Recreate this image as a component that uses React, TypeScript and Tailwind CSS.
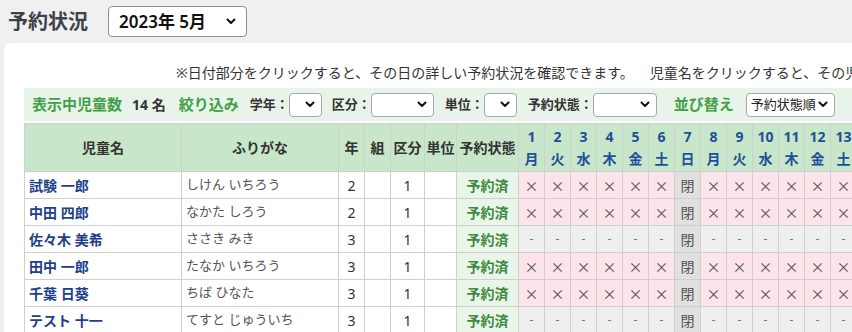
import React from "react";

const days = [
  ["1", "月"], ["2", "火"], ["3", "水"], ["4", "木"], ["5", "金"], ["6", "土"], ["7", "日"],
  ["8", "月"], ["9", "火"], ["10", "水"], ["11", "木"], ["12", "金"], ["13", "土"], ["14", "日"],
];

const rows = [
  { name: "試験 一郎", kana: "しけん いちろう", grade: "2", kubun: "1", x: true },
  { name: "中田 四郎", kana: "なかた しろう", grade: "2", kubun: "1", x: true },
  { name: "佐々木 美希", kana: "ささき みき", grade: "3", kubun: "1", x: false },
  { name: "田中 一郎", kana: "たなか いちろう", grade: "3", kubun: "1", x: true },
  { name: "千葉 日葵", kana: "ちば ひなた", grade: "3", kubun: "1", x: true },
  { name: "テスト 十一", kana: "てすと じゅういち", grade: "3", kubun: "1", x: false },
];

function Chevron() {
  return (
    <svg width="10" height="7" viewBox="0 0 10 7" className="shrink-0">
      <path d="M1.5 1.5 L5 5 L8.5 1.5" fill="none" stroke="#111" strokeWidth="2" strokeLinecap="round" strokeLinejoin="round" />
    </svg>
  );
}

function Sel({ w, text }: { w: string; text?: string }) {
  return (
    <div className={`${w} h-[24px] bg-white border border-[#a7a7a7] rounded-[4px] flex items-center justify-end pr-[6px] pl-[4px] gap-[2px]`}>
      {text ? <span className="flex-1 text-[13px] text-[#222] leading-none whitespace-nowrap">{text}</span> : null}
      <Chevron />
    </div>
  );
}

export default function App() {
  const font = { fontFamily: '"Noto Sans", "Noto Sans CJK JP", sans-serif' };
  const cjk = { fontFamily: '"Noto Sans CJK JP", sans-serif' };
  return (
    <div className="w-[852px] h-[332px] overflow-hidden bg-[#f0f0f1]" style={font}>
      <div className="flex items-center h-[43px] pl-[8px]">
        <h1 className="text-[20px] font-bold text-[#3c434a] leading-none">予約状況</h1>
        <div className="ml-[20px] w-[139px] h-[31px] border border-[#8c8f94] rounded-[4px] bg-white flex items-center pl-[10px] pr-[10px]">
          <span className="flex-1 text-[17px] font-semibold text-[#111] leading-none">2023年 5月</span>
          <Chevron />
        </div>
      </div>
      <div className="ml-[4px] w-[900px] bg-white rounded-tl-[8px] pt-[20px] pl-[20px] h-[300px]">
        <p className="text-[14px] text-[#333] pl-[152px] leading-[20px] whitespace-nowrap">
          ※日付部分をクリックすると、その日の詳しい予約状況を確認できます。<span className="ml-[16px]">児童名をクリックすると、その児童の予約状況を確認できます。</span>
        </p>
        <div className="mt-[5px] h-[33px] bg-[#e8f3e9] flex items-center pl-[8px] whitespace-nowrap">
          <span className="text-[15px] font-bold text-[#43a047]">表示中児童数</span>
          <span className="ml-[10px] text-[14px] font-bold text-[#333]">14 名</span>
          <span className="ml-[13px] text-[15px] font-bold text-[#43a047]">絞り込み</span>
          <span className="ml-[11px] text-[13px] font-bold text-[#333]">学年：</span>
          <Sel w="w-[33px]" />
          <span className="ml-[10px] text-[13px] font-bold text-[#333]">区分：</span>
          <Sel w="w-[63px]" />
          <span className="ml-[11px] text-[13px] font-bold text-[#333]">単位：</span>
          <Sel w="w-[33px]" />
          <span className="ml-[11px] text-[13px] font-bold text-[#333]">予約状態：</span>
          <Sel w="w-[64px]" />
          <span className="ml-[17px] text-[15px] font-bold text-[#43a047]">並び替え</span>
          <div className="ml-[12px]">
            <Sel w="w-[89px]" text="予約状態順" />
          </div>
        </div>
        <table className="mt-[2px] border-collapse table-fixed text-[14px]" style={{ width: 494 + 26 * days.length }}>
          <colgroup>
            <col style={{ width: 157 }} />
            <col style={{ width: 157 }} />
            <col style={{ width: 26 }} />
            <col style={{ width: 26 }} />
            <col style={{ width: 34 }} />
            <col style={{ width: 32 }} />
            <col style={{ width: 62 }} />
            {days.map((d) => (
              <col key={d[0]} style={{ width: 26 }} />
            ))}
          </colgroup>
          <thead>
            <tr className="h-[48px] bg-[#c8e6c9]">
              {["児童名", "ふりがな", "年", "組", "区分", "単位", "予約状態"].map((h) => (
                <th key={h} className="border border-[#cfcfcf] font-bold text-[#333] text-center px-0 whitespace-nowrap">
                  {h}
                </th>
              ))}
              {days.map(([n, w]) => (
                <th key={n} className="border border-[#cfcfcf] font-bold text-[#1f4e9c] text-center px-0 leading-[22px]">
                  <div>{n}</div>
                  <div>{w}</div>
                </th>
              ))}
            </tr>
          </thead>
          <tbody>
            {rows.map((r) => (
              <tr key={r.name} className="h-[27px]">
                <td className="border border-[#cfcfcf] pl-[4px] font-bold text-[#1d4189] whitespace-nowrap">{r.name}</td>
                <td className="border border-[#cfcfcf] pl-[4px] text-[13px] text-[#555] whitespace-nowrap">{r.kana}</td>
                <td className="border border-[#cfcfcf] text-center text-[#333]">{r.grade}</td>
                <td className="border border-[#cfcfcf]"></td>
                <td className="border border-[#cfcfcf] text-center text-[#333]">{r.kubun}</td>
                <td className="border border-[#cfcfcf]"></td>
                <td className="border border-[#cfcfcf] text-center font-bold text-[#3d8b40] bg-[#eaf5ea]">予約済</td>
                {days.map(([n, w]) =>
                  w === "日" ? (
                    <td key={n} className="border border-[#cfcfcf] text-center text-[#555] bg-[#e0e0e0]">閉</td>
                  ) : r.x ? (
                    <td key={n} className="border border-[#cfcfcf] text-center text-[#555] bg-[#fde4ea] text-[14px]" style={cjk}>×</td>
                  ) : (
                    <td key={n} className="border border-[#cfcfcf] text-center text-[#777] bg-[#efefef] text-[12px]">-</td>
                  )
                )}
              </tr>
            ))}
          </tbody>
        </table>
      </div>
    </div>
  );
}
